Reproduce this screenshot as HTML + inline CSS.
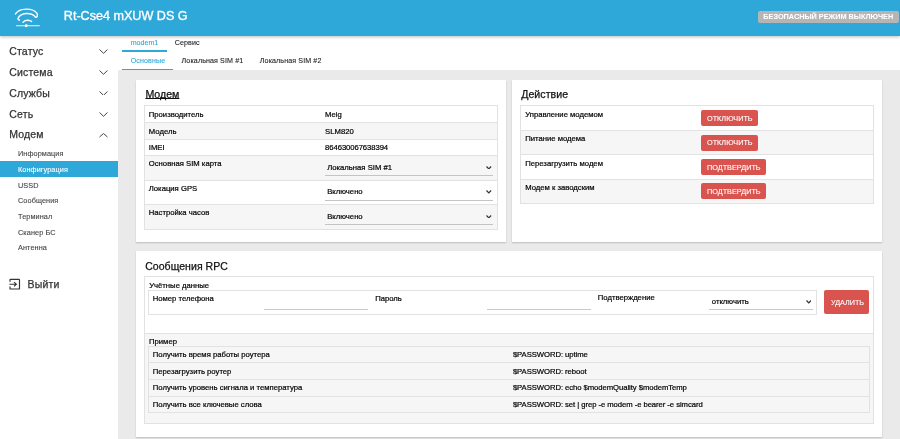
<!DOCTYPE html>
<html><head><meta charset="utf-8">
<style>
*{box-sizing:border-box;margin:0;padding:0}
html,body{width:900px;height:439px;overflow:hidden;background:#fff;font-family:"Liberation Sans",sans-serif;color:#222;-webkit-font-smoothing:antialiased}
#root{position:absolute;left:0;top:0;width:900px;height:439px;will-change:transform;overflow:hidden}
.bx{position:absolute}
.tx{position:absolute;white-space:nowrap;-webkit-text-stroke-color:currentColor}
</style></head><body><div id="root">
<div class="bx" style="left:118.00px;top:70.00px;width:782.00px;height:369.00px;background:#eaeaea"></div>
<div class="bx" style="left:0.00px;top:0.00px;width:900.00px;height:36.00px;background:#2ea7d9;box-shadow:0 1px 3px rgba(0,0,0,.25);z-index:5"></div>
<svg class="bx" style="left:12px;top:6px;width:32px;height:24px;z-index:6" viewBox="12 6 32 24" fill="none" stroke="#fff" stroke-width="1.4" stroke-linecap="round" stroke-linejoin="round">
    <path d="M15.5 13.9 C19.5 7.7, 33 7.5, 37 13.4 C37.9 15.3, 37.1 17.6, 35.5 17.2 C32 12.3, 21.8 12.1, 18.3 17.7 C17.6 19.1, 18.3 20.4, 19.5 20"/>
    <path d="M23 22.3 C24.6 19.9, 29.6 19.6, 31.6 21.6"/>
    <path d="M16.5 25.7 H39.3" stroke-width="1.15" stroke-opacity="0.9"/>
    <circle cx="26.2" cy="25.7" r="1.45" fill="#fff" stroke="none"/>
  </svg>
<div class="tx" style="left:63.80px;top:10.00px;font-size:12.6px;line-height:12.6px;color:#fff;letter-spacing:0px;-webkit-text-stroke-width:0.35px;z-index:6">Rt-Cse4 mXUW DS G</div>
<div class="bx" style="left:758.00px;top:11.20px;width:140.70px;height:11.50px;background:#b5b5b5;border-radius:2px;z-index:6"></div>
<div class="tx" style="left:763.30px;top:13.00px;font-size:7.3px;line-height:7.3px;color:#fff;letter-spacing:0px;-webkit-text-stroke-width:0.05px;font-weight:bold;z-index:6">БЕЗОПАСНЫЙ РЕЖИМ ВЫКЛЮЧЕН</div>
<div class="tx" style="left:9.30px;top:46.00px;font-size:10.5px;line-height:10.5px;color:#333;letter-spacing:0.15px;-webkit-text-stroke-width:0.25px;">Статус</div>
<div class="tx" style="left:9.30px;top:67.00px;font-size:10.5px;line-height:10.5px;color:#333;letter-spacing:0.15px;-webkit-text-stroke-width:0.25px;">Система</div>
<div class="tx" style="left:9.30px;top:88.00px;font-size:10.5px;line-height:10.5px;color:#333;letter-spacing:0.15px;-webkit-text-stroke-width:0.25px;">Службы</div>
<div class="tx" style="left:9.30px;top:109.00px;font-size:10.5px;line-height:10.5px;color:#333;letter-spacing:0.15px;-webkit-text-stroke-width:0.25px;">Сеть</div>
<div class="tx" style="left:9.30px;top:129.00px;font-size:10.5px;line-height:10.5px;color:#333;letter-spacing:0.15px;-webkit-text-stroke-width:0.25px;">Модем</div>
<svg class="bx" style="left:99px;top:49.1px;width:9px;height:4.8px" viewBox="0 0 9 4.8"><path d="M0.5 0.5 L4.5 4.3 L8.5 0.5" fill="none" stroke="#444" stroke-width="1.0" stroke-linecap="butt"/></svg>
<svg class="bx" style="left:99px;top:69.89999999999999px;width:9px;height:4.8px" viewBox="0 0 9 4.8"><path d="M0.5 0.5 L4.5 4.3 L8.5 0.5" fill="none" stroke="#444" stroke-width="1.0" stroke-linecap="butt"/></svg>
<svg class="bx" style="left:99px;top:90.69999999999999px;width:9px;height:4.8px" viewBox="0 0 9 4.8"><path d="M0.5 0.5 L4.5 4.3 L8.5 0.5" fill="none" stroke="#444" stroke-width="1.0" stroke-linecap="butt"/></svg>
<svg class="bx" style="left:99px;top:112.1px;width:9px;height:4.8px" viewBox="0 0 9 4.8"><path d="M0.5 0.5 L4.5 4.3 L8.5 0.5" fill="none" stroke="#444" stroke-width="1.0" stroke-linecap="butt"/></svg>
<svg class="bx" style="left:99px;top:133.3px;width:9px;height:4.5px" viewBox="0 0 9 4.5"><path d="M0.5 4.0 L4.5 0.5 L8.5 4.0" fill="none" stroke="#444" stroke-width="1.0" stroke-linecap="butt"/></svg>
<div class="bx" style="left:0.00px;top:161.00px;width:118.00px;height:16.00px;background:#2ea7d9"></div>
<div class="tx" style="left:18.00px;top:150.00px;font-size:7.3px;line-height:7.3px;color:#444;letter-spacing:0.08px;-webkit-text-stroke-width:0.1px;">Информация</div>
<div class="tx" style="left:18.00px;top:166.00px;font-size:7.3px;line-height:7.3px;color:#fff;letter-spacing:0.08px;-webkit-text-stroke-width:0.1px;">Конфигурация</div>
<div class="tx" style="left:18.00px;top:182.00px;font-size:7.3px;line-height:7.3px;color:#444;letter-spacing:0.08px;-webkit-text-stroke-width:0.1px;">USSD</div>
<div class="tx" style="left:18.00px;top:197.00px;font-size:7.3px;line-height:7.3px;color:#444;letter-spacing:0.08px;-webkit-text-stroke-width:0.1px;">Сообщения</div>
<div class="tx" style="left:18.00px;top:213.00px;font-size:7.3px;line-height:7.3px;color:#444;letter-spacing:0.08px;-webkit-text-stroke-width:0.1px;">Терминал</div>
<div class="tx" style="left:18.00px;top:229.00px;font-size:7.3px;line-height:7.3px;color:#444;letter-spacing:0.08px;-webkit-text-stroke-width:0.1px;">Сканер БС</div>
<div class="tx" style="left:18.00px;top:244.00px;font-size:7.3px;line-height:7.3px;color:#444;letter-spacing:0.08px;-webkit-text-stroke-width:0.1px;">Антенна</div>
<svg class="bx" style="left:9px;top:278px;width:12px;height:12px" viewBox="9 278 12 12" fill="none" stroke="#333" stroke-width="1.15">
    <path d="M10 281.7 V279.9 Q10 279.3 10.6 279.3 H18.9 Q19.5 279.3 19.5 279.9 V288.4 Q19.5 289 18.9 289 H10.6 Q10 289 10 288.4 V286.6"/>
    <path d="M9.4 284.2 H16.2 M14.1 282.1 L16.3 284.2 L14.1 286.3"/>
  </svg>
<div class="tx" style="left:27.60px;top:279.00px;font-size:10.5px;line-height:10.5px;color:#333;letter-spacing:0.15px;-webkit-text-stroke-width:0.25px;">Выйти</div>
<div class="tx" style="left:130.70px;top:40.00px;font-size:7.1px;line-height:7.1px;color:#2ea7d9;letter-spacing:0px;-webkit-text-stroke-width:0.1px;">modem1</div>
<div class="tx" style="left:174.70px;top:40.00px;font-size:7.1px;line-height:7.1px;color:#222;letter-spacing:0.12px;-webkit-text-stroke-width:0.1px;">Сервис</div>
<div class="bx" style="left:122.40px;top:50.00px;width:44.50px;height:1.60px;background:#2ea7d9"></div>
<div class="tx" style="left:130.70px;top:58.00px;font-size:7.1px;line-height:7.1px;color:#2ea7d9;letter-spacing:0.12px;-webkit-text-stroke-width:0.1px;">Основные</div>
<div class="tx" style="left:181.60px;top:58.00px;font-size:7.1px;line-height:7.1px;color:#222;letter-spacing:0.12px;-webkit-text-stroke-width:0.1px;">Локальная SIM #1</div>
<div class="tx" style="left:259.80px;top:58.00px;font-size:7.1px;line-height:7.1px;color:#222;letter-spacing:0.12px;-webkit-text-stroke-width:0.1px;">Локальная SIM #2</div>
<div class="bx" style="left:122.40px;top:68.50px;width:50.60px;height:1.60px;background:#2ea7d9"></div>
<div class="bx" style="left:136.00px;top:79.50px;width:370.30px;height:162.70px;background:#fff;box-shadow:0 1px 1.5px rgba(0,0,0,.2)"></div>
<div class="bx" style="left:512.00px;top:79.50px;width:370.20px;height:162.70px;background:#fff;box-shadow:0 1px 1.5px rgba(0,0,0,.2)"></div>
<div class="bx" style="left:136.00px;top:250.60px;width:746.20px;height:186.00px;background:#fff;box-shadow:0 1px 1.5px rgba(0,0,0,.2)"></div>
<div class="tx" style="left:145.40px;top:89.00px;font-size:10.6px;line-height:10.6px;color:#111;letter-spacing:0px;-webkit-text-stroke-width:0.25px;text-decoration:underline;text-underline-offset:0px;text-decoration-thickness:0.9px;text-decoration-skip-ink:none">Модем</div>
<div class="bx" style="left:144.50px;top:105.20px;width:352.60px;height:17.10px;background:#fff"></div>
<div class="bx" style="left:144.50px;top:122.30px;width:352.60px;height:17.20px;background:#f6f6f6"></div>
<div class="bx" style="left:144.50px;top:139.50px;width:352.60px;height:16.30px;background:#fff"></div>
<div class="bx" style="left:144.50px;top:155.80px;width:352.60px;height:24.60px;background:#f6f6f6"></div>
<div class="bx" style="left:144.50px;top:180.40px;width:352.60px;height:24.10px;background:#fff"></div>
<div class="bx" style="left:144.50px;top:204.50px;width:352.60px;height:24.70px;background:#f6f6f6"></div>
<div class="bx" style="left:144.50px;top:104.70px;width:352.60px;height:1.00px;background:#e2e2e2"></div>
<div class="bx" style="left:144.50px;top:121.80px;width:352.60px;height:1.00px;background:#e2e2e2"></div>
<div class="bx" style="left:144.50px;top:139.00px;width:352.60px;height:1.00px;background:#e2e2e2"></div>
<div class="bx" style="left:144.50px;top:155.30px;width:352.60px;height:1.00px;background:#e2e2e2"></div>
<div class="bx" style="left:144.50px;top:179.90px;width:352.60px;height:1.00px;background:#e2e2e2"></div>
<div class="bx" style="left:144.50px;top:204.00px;width:352.60px;height:1.00px;background:#e2e2e2"></div>
<div class="bx" style="left:144.50px;top:228.70px;width:352.60px;height:1.00px;background:#e2e2e2"></div>
<div class="bx" style="left:144.00px;top:104.70px;width:1.00px;height:125.00px;background:#e2e2e2"></div>
<div class="bx" style="left:496.60px;top:104.70px;width:1.00px;height:125.00px;background:#e2e2e2"></div>
<div class="tx" style="left:148.80px;top:111.00px;font-size:7.7px;line-height:7.7px;color:#000;letter-spacing:0px;-webkit-text-stroke-width:0.2px;">Производитель</div>
<div class="tx" style="left:148.80px;top:128.00px;font-size:7.7px;line-height:7.7px;color:#000;letter-spacing:0px;-webkit-text-stroke-width:0.2px;">Модель</div>
<div class="tx" style="left:148.80px;top:144.00px;font-size:7.7px;line-height:7.7px;color:#000;letter-spacing:0px;-webkit-text-stroke-width:0.2px;">IMEI</div>
<div class="tx" style="left:148.80px;top:160.00px;font-size:7.7px;line-height:7.7px;color:#000;letter-spacing:0px;-webkit-text-stroke-width:0.2px;">Основная SIM карта</div>
<div class="tx" style="left:148.80px;top:185.00px;font-size:7.7px;line-height:7.7px;color:#000;letter-spacing:0px;-webkit-text-stroke-width:0.2px;">Локация GPS</div>
<div class="tx" style="left:148.80px;top:209.00px;font-size:7.7px;line-height:7.7px;color:#000;letter-spacing:0px;-webkit-text-stroke-width:0.2px;">Настройка часов</div>
<div class="tx" style="left:325.10px;top:111.00px;font-size:7.7px;line-height:7.7px;color:#000;letter-spacing:0px;-webkit-text-stroke-width:0.2px;">Meig</div>
<div class="tx" style="left:325.10px;top:128.00px;font-size:7.7px;line-height:7.7px;color:#000;letter-spacing:0px;-webkit-text-stroke-width:0.2px;">SLM820</div>
<div class="tx" style="left:325.10px;top:144.00px;font-size:7.7px;line-height:7.7px;color:#000;letter-spacing:-0.08px;-webkit-text-stroke-width:0.2px;">864630067638394</div>
<div class="tx" style="left:327.20px;top:164.00px;font-size:7.7px;line-height:7.7px;color:#000;letter-spacing:0px;-webkit-text-stroke-width:0.2px;">Локальная SIM #1</div>
<div class="bx" style="left:325.10px;top:175.00px;width:168.00px;height:1.00px;background:#c4c4c4"></div>
<svg class="bx" style="left:486px;top:166.1px;width:5.6px;height:3.4px" viewBox="0 0 5.6 3.4"><path d="M0.5 0.5 L2.8 2.9 L5.1 0.5" fill="none" stroke="#333" stroke-width="1.2" stroke-linecap="butt"/></svg>
<div class="tx" style="left:327.20px;top:188.00px;font-size:7.7px;line-height:7.7px;color:#000;letter-spacing:0px;-webkit-text-stroke-width:0.2px;">Включено</div>
<div class="bx" style="left:325.10px;top:200.00px;width:168.00px;height:1.00px;background:#c4c4c4"></div>
<svg class="bx" style="left:486px;top:190.4px;width:5.6px;height:3.4px" viewBox="0 0 5.6 3.4"><path d="M0.5 0.5 L2.8 2.9 L5.1 0.5" fill="none" stroke="#333" stroke-width="1.2" stroke-linecap="butt"/></svg>
<div class="tx" style="left:327.20px;top:213.00px;font-size:7.7px;line-height:7.7px;color:#000;letter-spacing:0px;-webkit-text-stroke-width:0.2px;">Включено</div>
<div class="bx" style="left:325.10px;top:224.00px;width:168.00px;height:1.00px;background:#c4c4c4"></div>
<svg class="bx" style="left:486px;top:214.9px;width:5.6px;height:3.4px" viewBox="0 0 5.6 3.4"><path d="M0.5 0.5 L2.8 2.9 L5.1 0.5" fill="none" stroke="#333" stroke-width="1.2" stroke-linecap="butt"/></svg>
<div class="tx" style="left:521.20px;top:89.00px;font-size:10.6px;line-height:10.6px;color:#111;letter-spacing:0.05px;-webkit-text-stroke-width:0.25px;">Действие</div>
<div class="bx" style="left:520.30px;top:105.10px;width:353.30px;height:25.00px;background:#fff"></div>
<div class="bx" style="left:520.30px;top:130.10px;width:353.30px;height:24.70px;background:#f6f6f6"></div>
<div class="bx" style="left:520.30px;top:154.80px;width:353.30px;height:24.50px;background:#fff"></div>
<div class="bx" style="left:520.30px;top:179.30px;width:353.30px;height:23.90px;background:#f6f6f6"></div>
<div class="bx" style="left:520.30px;top:104.60px;width:353.30px;height:1.00px;background:#e2e2e2"></div>
<div class="bx" style="left:520.30px;top:129.60px;width:353.30px;height:1.00px;background:#e2e2e2"></div>
<div class="bx" style="left:520.30px;top:154.30px;width:353.30px;height:1.00px;background:#e2e2e2"></div>
<div class="bx" style="left:520.30px;top:178.80px;width:353.30px;height:1.00px;background:#e2e2e2"></div>
<div class="bx" style="left:520.30px;top:202.70px;width:353.30px;height:1.00px;background:#e2e2e2"></div>
<div class="bx" style="left:519.80px;top:104.60px;width:1.00px;height:99.10px;background:#e2e2e2"></div>
<div class="bx" style="left:873.10px;top:104.60px;width:1.00px;height:99.10px;background:#e2e2e2"></div>
<div class="tx" style="left:525.20px;top:111.00px;font-size:7.7px;line-height:7.7px;color:#000;letter-spacing:0px;-webkit-text-stroke-width:0.2px;">Управление модемом</div>
<div class="tx" style="left:525.20px;top:135.00px;font-size:7.7px;line-height:7.7px;color:#000;letter-spacing:0px;-webkit-text-stroke-width:0.2px;">Питание модема</div>
<div class="tx" style="left:525.20px;top:160.00px;font-size:7.7px;line-height:7.7px;color:#000;letter-spacing:0px;-webkit-text-stroke-width:0.2px;">Перезагрузить модем</div>
<div class="tx" style="left:525.20px;top:184.00px;font-size:7.7px;line-height:7.7px;color:#000;letter-spacing:0px;-webkit-text-stroke-width:0.2px;">Модем к заводским</div>
<div class="bx" style="left:701.30px;top:110.00px;width:57.00px;height:16.00px;background:#d9534f;border-radius:2px"></div>
<div class="tx" style="left:701.3px;top:115px;width:57px;line-height:7.3px;text-align:center;font-size:7.3px;color:#fff;letter-spacing:0px;-webkit-text-stroke-width:0.1px">ОТКЛЮЧИТЬ</div>
<div class="bx" style="left:701.30px;top:135.00px;width:57.00px;height:16.00px;background:#d9534f;border-radius:2px"></div>
<div class="tx" style="left:701.3px;top:139px;width:57px;line-height:7.3px;text-align:center;font-size:7.3px;color:#fff;letter-spacing:0px;-webkit-text-stroke-width:0.1px">ОТКЛЮЧИТЬ</div>
<div class="bx" style="left:701.30px;top:159.00px;width:65.00px;height:16.00px;background:#d9534f;border-radius:2px"></div>
<div class="tx" style="left:701.3px;top:164px;width:65px;line-height:7.3px;text-align:center;font-size:7.3px;color:#fff;letter-spacing:0px;-webkit-text-stroke-width:0.1px">ПОДТВЕРДИТЬ</div>
<div class="bx" style="left:701.30px;top:183.00px;width:65.00px;height:16.00px;background:#d9534f;border-radius:2px"></div>
<div class="tx" style="left:701.3px;top:188px;width:65px;line-height:7.3px;text-align:center;font-size:7.3px;color:#fff;letter-spacing:0px;-webkit-text-stroke-width:0.1px">ПОДТВЕРДИТЬ</div>
<div class="tx" style="left:145.20px;top:261.00px;font-size:10.5px;line-height:10.5px;color:#111;letter-spacing:0.05px;-webkit-text-stroke-width:0.25px;">Сообщения RPC</div>
<div class="bx" style="left:144.50px;top:276.80px;width:729.10px;height:56.50px;background:#fff"></div>
<div class="bx" style="left:144.50px;top:333.30px;width:729.10px;height:90.40px;background:#f6f6f6"></div>
<div class="bx" style="left:144.50px;top:276.30px;width:729.10px;height:1.00px;background:#e2e2e2"></div>
<div class="bx" style="left:144.50px;top:332.80px;width:729.10px;height:1.00px;background:#e2e2e2"></div>
<div class="bx" style="left:144.50px;top:423.20px;width:729.10px;height:1.00px;background:#e2e2e2"></div>
<div class="bx" style="left:144.00px;top:276.30px;width:1.00px;height:147.90px;background:#e2e2e2"></div>
<div class="bx" style="left:873.10px;top:276.30px;width:1.00px;height:147.90px;background:#e2e2e2"></div>
<div class="tx" style="left:149.20px;top:282.00px;font-size:7.7px;line-height:7.7px;color:#000;letter-spacing:0px;-webkit-text-stroke-width:0.2px;">Учётные данные</div>
<div class="bx" style="left:148.30px;top:290.00px;width:669.10px;height:24.50px;background:#fff;box-shadow:inset 0 0 0 1px #e2e2e2"></div>
<div class="tx" style="left:152.70px;top:295.00px;font-size:7.7px;line-height:7.7px;color:#000;letter-spacing:0px;-webkit-text-stroke-width:0.2px;">Номер телефона</div>
<div class="bx" style="left:264.20px;top:309.10px;width:103.60px;height:1.20px;background:#c9c9c9"></div>
<div class="tx" style="left:375.20px;top:295.00px;font-size:7.7px;line-height:7.7px;color:#000;letter-spacing:0px;-webkit-text-stroke-width:0.2px;">Пароль</div>
<div class="bx" style="left:486.70px;top:309.10px;width:104.00px;height:1.20px;background:#c9c9c9"></div>
<div class="tx" style="left:597.80px;top:294.00px;font-size:7.7px;line-height:7.7px;color:#000;letter-spacing:0px;-webkit-text-stroke-width:0.2px;">Подтверждение</div>
<div class="tx" style="left:711.80px;top:298.00px;font-size:7.7px;line-height:7.7px;color:#000;letter-spacing:0px;-webkit-text-stroke-width:0.2px;">отключить</div>
<div class="bx" style="left:709.00px;top:309.00px;width:104.00px;height:1.20px;background:#c9c9c9"></div>
<svg class="bx" style="left:805.8px;top:300.2px;width:5.6px;height:3.4px" viewBox="0 0 5.6 3.4"><path d="M0.5 0.5 L2.8 2.9 L5.1 0.5" fill="none" stroke="#333" stroke-width="1.2" stroke-linecap="butt"/></svg>
<div class="bx" style="left:824.00px;top:290.10px;width:45.30px;height:24.20px;background:#d9534f;border-radius:2px"></div>
<div class="tx" style="left:831.00px;top:299.00px;font-size:7.2px;line-height:7.2px;color:#fff;letter-spacing:0px;-webkit-text-stroke-width:0.1px;">УДАЛИТЬ</div>
<div class="tx" style="left:149.00px;top:338.00px;font-size:7.7px;line-height:7.7px;color:#000;letter-spacing:0px;-webkit-text-stroke-width:0.2px;">Пример</div>
<div class="bx" style="left:148.30px;top:346.20px;width:721.50px;height:16.50px;background:#f6f6f6"></div>
<div class="bx" style="left:148.30px;top:362.70px;width:721.50px;height:16.80px;background:#f6f6f6"></div>
<div class="bx" style="left:148.30px;top:379.50px;width:721.50px;height:16.70px;background:#f6f6f6"></div>
<div class="bx" style="left:148.30px;top:396.20px;width:721.50px;height:16.30px;background:#f6f6f6"></div>
<div class="bx" style="left:148.30px;top:345.70px;width:721.50px;height:1.00px;background:#e2e2e2"></div>
<div class="bx" style="left:148.30px;top:362.20px;width:721.50px;height:1.00px;background:#e2e2e2"></div>
<div class="bx" style="left:148.30px;top:379.00px;width:721.50px;height:1.00px;background:#e2e2e2"></div>
<div class="bx" style="left:148.30px;top:395.70px;width:721.50px;height:1.00px;background:#e2e2e2"></div>
<div class="bx" style="left:148.30px;top:412.00px;width:721.50px;height:1.00px;background:#e2e2e2"></div>
<div class="bx" style="left:147.80px;top:345.70px;width:1.00px;height:67.30px;background:#e2e2e2"></div>
<div class="bx" style="left:869.30px;top:345.70px;width:1.00px;height:67.30px;background:#e2e2e2"></div>
<div class="tx" style="left:152.80px;top:351.00px;font-size:7.7px;line-height:7.7px;color:#000;letter-spacing:0px;-webkit-text-stroke-width:0.2px;">Получить время работы роутера</div>
<div class="tx" style="left:512.90px;top:351.00px;font-size:7.7px;line-height:7.7px;color:#000;letter-spacing:-0.06px;-webkit-text-stroke-width:0.2px;">$PASSWORD: uptime</div>
<div class="tx" style="left:152.80px;top:368.00px;font-size:7.7px;line-height:7.7px;color:#000;letter-spacing:0px;-webkit-text-stroke-width:0.2px;">Перезагрузить роутер</div>
<div class="tx" style="left:512.90px;top:368.00px;font-size:7.7px;line-height:7.7px;color:#000;letter-spacing:-0.06px;-webkit-text-stroke-width:0.2px;">$PASSWORD: reboot</div>
<div class="tx" style="left:152.80px;top:384.00px;font-size:7.7px;line-height:7.7px;color:#000;letter-spacing:0px;-webkit-text-stroke-width:0.2px;">Получить уровень сигнала и температура</div>
<div class="tx" style="left:512.90px;top:384.00px;font-size:7.7px;line-height:7.7px;color:#000;letter-spacing:-0.06px;-webkit-text-stroke-width:0.2px;">$PASSWORD: echo $modemQuality $modemTemp</div>
<div class="tx" style="left:152.80px;top:401.00px;font-size:7.7px;line-height:7.7px;color:#000;letter-spacing:0px;-webkit-text-stroke-width:0.2px;">Получить все ключевые слова</div>
<div class="tx" style="left:512.90px;top:401.00px;font-size:7.7px;line-height:7.7px;color:#000;letter-spacing:-0.06px;-webkit-text-stroke-width:0.2px;">$PASSWORD: set | grep -e modem -e bearer -e simcard</div>
</div></body></html>
